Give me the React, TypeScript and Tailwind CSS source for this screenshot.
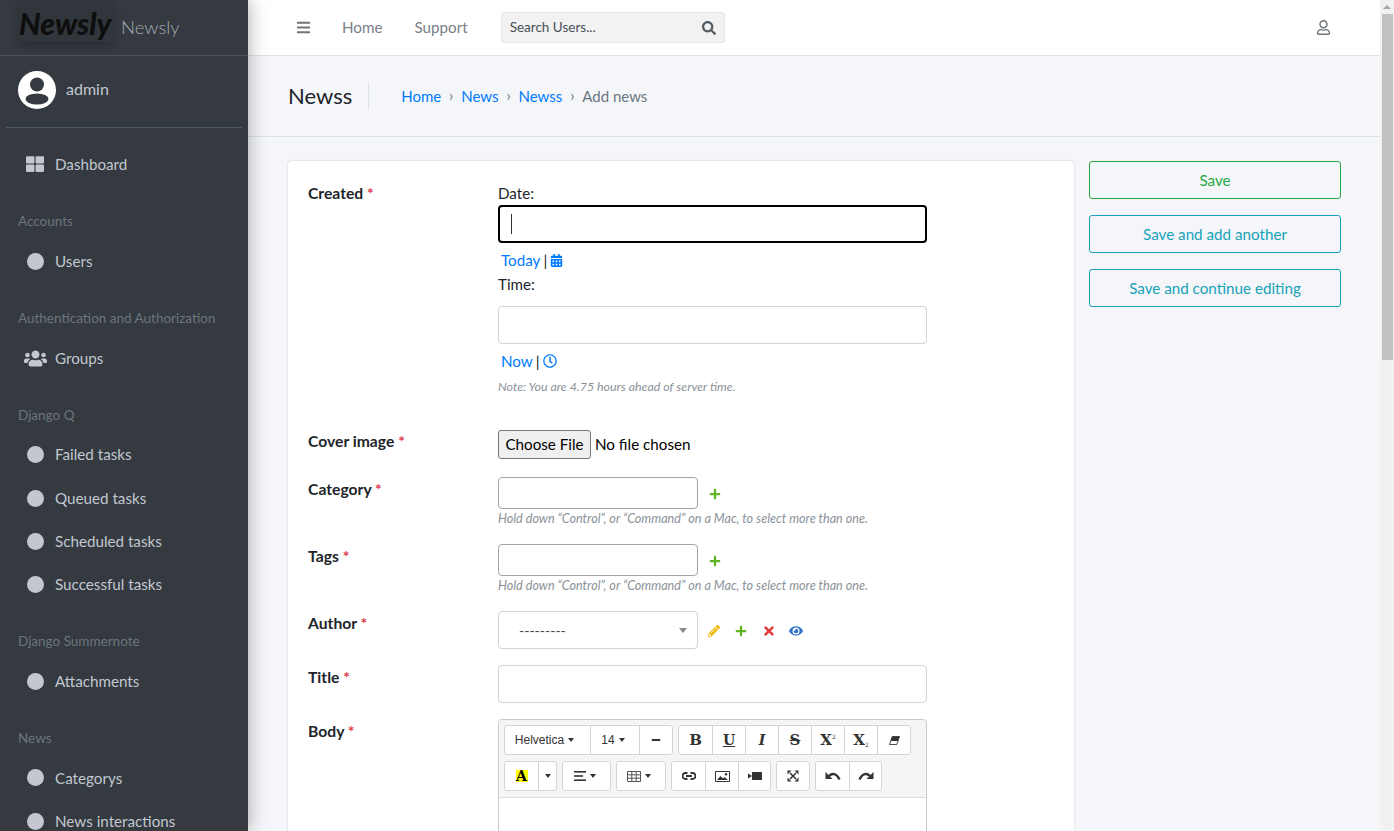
import type { ReactNode } from 'react';
import {
  FaBars,
  FaCalendarAlt,
  FaEye,
  FaMinus,
  FaPencilAlt,
  FaPlus,
  FaRegClock,
  FaRegUser,
  FaSearch,
  FaThLarge,
  FaTimes,
  FaUsers,
} from 'react-icons/fa';

const Dot = () => <div className="w-[17px] h-[17px] ml-[1px] rounded-full bg-[#c2c7d0]" />;

const NavItem = ({ label, icon }: { label: string; icon?: ReactNode }) => (
  <div className="flex items-center h-[43.2px] pl-[17px] shrink-0 text-[#c2c7d0]">
    <div className="w-[38px] pr-[2px] flex justify-center">{icon ?? <Dot />}</div>
    <span>{label}</span>
  </div>
);

const NavHeader = ({ label }: { label: string }) => (
  <div className="h-[53.6px] pt-[23px] pl-[18px] shrink-0 text-[13.5px] leading-[24px] text-[#6c757d]">{label}</div>
);

const Sidebar = () => (
  <aside className="w-[248px] shrink-0 bg-[#343a40] h-full overflow-hidden flex flex-col shadow-[0_0_18px_rgba(0,0,0,0.35)] z-10">
    <div className="h-[56px] shrink-0 border-b border-[#4b545c] flex items-start pl-[19px]">
      <div className="w-[94px] h-[42px] bg-[#31363c] shadow-[0_4px_8px_rgba(0,0,0,0.22)] text-[#0e0e0e] italic font-black text-[30px] leading-[46px] overflow-hidden">
        Newsly
      </div>
      <span className="ml-[8px] mt-[14px] text-[18.5px] leading-[26px] font-light text-[#a4abb3]">Newsly</span>
    </div>
    <div className="mx-[6px] h-[72px] shrink-0 border-b border-[#4f5962] flex items-center pl-[12px] pb-[4px]">
      <div className="w-[38px] h-[38px] rounded-full bg-white overflow-hidden">
        <svg viewBox="0 0 38 38" className="w-full h-full">
          <circle cx="19" cy="13.5" r="7" fill="#343a40" />
          <ellipse cx="19" cy="28" rx="11.5" ry="5.5" fill="#343a40" />
        </svg>
      </div>
      <span className="ml-[10px] pb-[2px] text-[16px] text-[#c2c7d0]">admin</span>
    </div>
    <nav className="flex flex-col pt-[14.9px]">
      <NavItem label="Dashboard" icon={<FaThLarge className="text-[18px]" />} />
      <NavHeader label="Accounts" />
      <NavItem label="Users" />
      <NavHeader label="Authentication and Authorization" />
      <NavItem label="Groups" icon={<FaUsers className="text-[23px]" />} />
      <NavHeader label="Django Q" />
      <NavItem label="Failed tasks" />
      <NavItem label="Queued tasks" />
      <NavItem label="Scheduled tasks" />
      <NavItem label="Successful tasks" />
      <NavHeader label="Django Summernote" />
      <NavItem label="Attachments" />
      <NavHeader label="News" />
      <NavItem label="Categorys" />
      <NavItem label="News interactions" />
    </nav>
  </aside>
);

const Topbar = () => (
  <header className="h-[56px] shrink-0 bg-white border-b border-[#dee2e6] flex items-center pl-[48px] pr-[49px] text-[#7a8087]">
    <FaBars className="text-[15px] text-[#6f7479]" />
    <span className="ml-[31px]">Home</span>
    <span className="ml-[32px]">Support</span>
    <div className="ml-[33px] w-[224px] h-[31px] bg-[#f2f2f2] border border-[#e3e5e8] rounded-[3px] flex items-center justify-between px-[8px] text-[13.5px] text-[#495057]">
      <span>Search Users...</span>
      <FaSearch className="text-[14px] text-[#555c63]" />
    </div>
    <FaRegUser className="ml-auto text-[15px] text-[#6f7479]" />
  </header>
);

const Sep = () => <span className="w-[20px] text-center text-[#6c757d] text-[15px] -mt-[2px]">›</span>;

const ContentHeader = () => (
  <div className="h-[81px] shrink-0 border-b border-[#dee2e6] flex items-center pl-[40px]">
    <div className="h-[28px] pr-[16px] border-r border-[#dee2e6] text-[22px] leading-[28px] text-[#212529]">Newss</div>
    <div className="ml-[32px] flex items-center text-[15px] text-[#007bff]">
      <span>Home</span>
      <Sep />
      <span>News</span>
      <Sep />
      <span>Newss</span>
      <Sep />
      <span className="text-[#6c757d]">Add news</span>
    </div>
  </div>
);

const Label = ({ text }: { text: string }) => (
  <div className="w-[190px] shrink-0 font-bold text-[15.7px] text-[#212529] leading-[24px]">
    {text} <span className="text-[#dc3545]">*</span>
  </div>
);

const Help = ({ text }: { text: string }) => (
  <div className="mt-[1px] text-[12.6px] italic text-[#8b9299] leading-[18px]">{text}</div>
);

const ToolBtn = ({ children, w = 33 }: { children: ReactNode; w?: number }) => (
  <div
    className="h-[28px] flex items-center justify-center border-l border-[#d4d4d4] first:border-l-0 text-[#333] shrink-0"
    style={{ width: w }}
  >
    {children}
  </div>
);

const ToolGroup = ({ children }: { children: ReactNode }) => (
  <div className="flex bg-white border border-[#d4d4d4] rounded-[3px] overflow-hidden">{children}</div>
);

const Caret = () => (
  <span className="ml-[4px] w-0 h-0 border-x-[3px] border-x-transparent border-t-[4px] border-t-[#333]" />
);

const UndoIcon = ({ flip }: { flip?: boolean }) => (
  <svg viewBox="0 0 16 10" className={flip ? 'w-[16px] h-[10px] -scale-x-100' : 'w-[16px] h-[10px]'}>
    <path d="M4 5C7 1.8 11.5 2 14.5 8.5" fill="none" stroke="#333" strokeWidth="2.4" />
    <path d="M0.5 1v7H7.5z" fill="#333" />
  </svg>
);

const Toolbar = () => (
  <div className="bg-[#f5f5f5] border-b border-[#dddddd] px-[5px] pt-[5px] h-[78px] flex flex-col gap-[6px]">
    <div className="flex gap-[5px]">
      <ToolGroup>
        <ToolBtn w={85}>
          <span className="flex items-center pr-[6px]">
            <span className="font-['Liberation_Sans',sans-serif] text-[12px]">Helvetica</span>
            <Caret />
          </span>
        </ToolBtn>
        <ToolBtn w={49}>
          <span className="flex items-center pr-[4px]">
            <span className="font-['Liberation_Sans',sans-serif] text-[12px]">14</span>
            <Caret />
          </span>
        </ToolBtn>
        <ToolBtn w={33}>
          <FaMinus className="text-[10px]" />
        </ToolBtn>
      </ToolGroup>
      <ToolGroup>
        <ToolBtn><span className="font-['DejaVu_Serif',serif] font-bold text-[15px]">B</span></ToolBtn>
        <ToolBtn><span className="font-['DejaVu_Serif',serif] font-bold text-[14px] underline">U</span></ToolBtn>
        <ToolBtn><span className="font-['DejaVu_Serif',serif] font-bold italic text-[14px]">I</span></ToolBtn>
        <ToolBtn><span className="font-['DejaVu_Serif',serif] font-bold text-[15px] line-through">S</span></ToolBtn>
        <ToolBtn>
          <span className="font-['DejaVu_Serif',serif] font-bold text-[15px]">X</span>
          <span className="font-['DejaVu_Serif',serif] text-[6px] mb-[7px]">2</span>
        </ToolBtn>
        <ToolBtn>
          <span className="font-['DejaVu_Serif',serif] font-bold text-[15px]">X</span>
          <span className="font-['DejaVu_Serif',serif] text-[6px] mt-[8px]">2</span>
        </ToolBtn>
        <ToolBtn>
          <svg viewBox="0 0 12 10" className="w-[11px] h-[9px]">
            <path d="M3.5 0.5H11.5L8.5 9.5H0.5z" fill="#fff" stroke="#333" strokeWidth="1" />
            <path d="M3.5 0.5H11.5L9.8 5.5H1.9z" fill="#333" />
          </svg>
        </ToolBtn>
      </ToolGroup>
    </div>
    <div className="flex gap-[5px]">
      <ToolGroup>
        <ToolBtn>
          <span className="w-[12px] h-[12px] bg-[#ffff00] flex items-center justify-center font-['DejaVu_Serif',serif] font-bold text-[14px] leading-[12px] text-black">A</span>
        </ToolBtn>
        <ToolBtn w={18}><span className="-ml-[4px] flex"><Caret /></span></ToolBtn>
      </ToolGroup>
      <ToolGroup>
        <ToolBtn w={47}>
          <span className="flex items-center pr-[4px]">
            <svg viewBox="0 0 12 10" className="w-[12px] h-[10px]" fill="#333">
              <rect x="0" y="0" width="12" height="1.6" />
              <rect x="0" y="4.2" width="9" height="1.6" />
              <rect x="0" y="8.4" width="12" height="1.6" />
            </svg>
            <Caret />
          </span>
        </ToolBtn>
      </ToolGroup>
      <ToolGroup>
        <ToolBtn w={48}>
          <span className="flex items-center pr-[5px]">
            <svg viewBox="0 0 14 11" className="w-[14px] h-[11px]" fill="none" stroke="#555" strokeWidth="1">
              <path d="M0.5 0.5h13v10h-13zM0.5 3.8h13M0.5 7.2h13M4.8 0.5v10M9.2 0.5v10" />
            </svg>
            <Caret />
          </span>
        </ToolBtn>
      </ToolGroup>
      <ToolGroup>
        <ToolBtn>
          <svg viewBox="0 0 14 8" className="w-[14px] h-[8px]" fill="none" stroke="#333" strokeWidth="1.8">
            <path d="M5.5 1H3.5a3 3 0 0 0 0 6h2M8.5 1h2a3 3 0 0 1 0 6h-2M4 4h6" />
          </svg>
        </ToolBtn>
        <ToolBtn>
          <svg viewBox="0 0 15 11" className="w-[15px] h-[11px]" fill="#333">
            <path d="M0.5 0.5h14v10h-14z" fill="none" stroke="#333" strokeWidth="1" />
            <path d="M2 9l3.5-4 2.5 2.5 1.5-1.5L13 9z" />
            <circle cx="11" cy="3.2" r="1.2" />
          </svg>
        </ToolBtn>
        <ToolBtn w={32}>
          <svg viewBox="0 0 14 8" className="w-[14px] h-[8px]" fill="#333">
            <rect x="4" y="0" width="10" height="8" rx="0.5" />
            <path d="M0 1.5v5l4-2.5z" />
          </svg>
        </ToolBtn>
      </ToolGroup>
      <ToolGroup>
        <ToolBtn w={32}>
          <svg viewBox="0 0 12 12" className="w-[12px] h-[12px]" stroke="#333" strokeWidth="1.5" fill="#333">
            <path d="M3 3l6 6M9 3l-6 6" fill="none" />
            <path d="M0.5 0.5h4l-4 4zM11.5 0.5h-4l4 4zM0.5 11.5h4l-4-4zM11.5 11.5h-4l4-4z" stroke="none" />
          </svg>
        </ToolBtn>
      </ToolGroup>
      <ToolGroup>
        <ToolBtn><UndoIcon /></ToolBtn>
        <ToolBtn w={32}><UndoIcon flip /></ToolBtn>
      </ToolGroup>
    </div>
  </div>
);

const NewsForm = () => (
  <div className="w-[786px] shrink-0 bg-white rounded-[4px] shadow-[0_0_2px_rgba(0,0,0,0.2)] pt-[20px] pl-[20px] pb-[40px] text-[#212529]">
    <div className="flex">
      <Label text="Created" />
      <div className="w-[429px]">
        <div className="leading-[24px]">Date:</div>
        <div className="h-[38px] border-2 border-black rounded-[4px] flex items-center pl-[11px]">
          <div className="w-px h-[20px] bg-[#333]" />
        </div>
        <div className="flex items-center h-[24px] mt-[5px] pl-[3px]">
          <span className="text-[#007bff]">Today</span>
          <span className="ml-[3px]">|</span>
          <FaCalendarAlt className="ml-[3px] text-[13px] text-[#007bff]" />
        </div>
        <div className="leading-[24px]">Time:</div>
        <div className="h-[38px] mt-[10px] border border-[#ced4da] rounded-[4px]" />
        <div className="flex items-center h-[24px] mt-[5px] pl-[3px]">
          <span className="text-[#007bff]">Now</span>
          <span className="ml-[3px]">|</span>
          <FaRegClock className="ml-[3px] text-[14px] text-[#007bff]" />
        </div>
        <div className="mt-[5px] text-[12.4px] italic text-[#8b9299] leading-[18px]">
          Note: You are 4.75 hours ahead of server time.
        </div>
      </div>
    </div>

    <div className="flex mt-[33px]">
      <Label text="Cover image" />
      <div className="flex items-center mt-[1px]">
        <div className="w-[93px] h-[29px] bg-[#efefef] border border-[#767676] rounded-[3px] flex items-center justify-center text-black">
          Choose File
        </div>
        <span className="ml-[4px] text-black">No file chosen</span>
      </div>
    </div>

    <div className="flex mt-[18px]">
      <Label text="Category" />
      <div>
        <div className="flex items-center">
          <div className="w-[200px] h-[32px] border border-[#a5a5a5] rounded-[4px]" />
          <FaPlus className="ml-[11px] mt-[1px] text-[12px] text-[#5fb51f]" />
        </div>
        <Help text="Hold down “Control”, or “Command” on a Mac, to select more than one." />
      </div>
    </div>

    <div className="flex mt-[16px]">
      <Label text="Tags" />
      <div>
        <div className="flex items-center">
          <div className="w-[200px] h-[32px] border border-[#a5a5a5] rounded-[4px]" />
          <FaPlus className="ml-[11px] mt-[1px] text-[12px] text-[#5fb51f]" />
        </div>
        <Help text="Hold down “Control”, or “Command” on a Mac, to select more than one." />
      </div>
    </div>

    <div className="flex mt-[16px]">
      <Label text="Author" />
      <div className="flex items-center">
        <div className="w-[200px] h-[38px] border border-[#ced4da] rounded-[4px] flex items-center justify-between pl-[20px] pr-[10px] text-[#444]">
          <span className="text-[14px]">---------</span>
          <span className="w-0 h-0 border-x-[4px] border-x-transparent border-t-[5px] border-t-[#888]" />
        </div>
        <FaPencilAlt className="ml-[10px] mt-[1px] text-[12px] text-[#efb80b]" />
        <FaPlus className="ml-[15px] mt-[1px] text-[12px] text-[#5fb51f]" />
        <FaTimes className="ml-[15px] mt-[1px] text-[14px] text-[#e03c3c]" />
        <FaEye className="ml-[13px] mt-[1px] text-[14px] text-[#2e70c9]" />
      </div>
    </div>

    <div className="flex mt-[16px]">
      <Label text="Title" />
      <div className="w-[429px] h-[38px] border border-[#ced4da] rounded-[4px]" />
    </div>

    <div className="flex mt-[16px]">
      <Label text="Body" />
      <div className="w-[429px] border border-[#c9c9c9] rounded-t-[4px] overflow-hidden">
        <Toolbar />
        <div className="h-[200px] bg-white" />
      </div>
    </div>
  </div>
);

const SaveButton = ({ label, green }: { label: string; green?: boolean }) => (
  <div
    className={
      green
        ? 'h-[38px] pt-[1px] border border-[#28a745] text-[#28a745] rounded-[3px] flex items-center justify-center'
        : 'h-[38px] pt-[1px] border border-[#17a2b8] text-[#17a2b8] rounded-[3px] flex items-center justify-center'
    }
  >
    {label}
  </div>
);

const Scrollbar = () => (
  <div className="w-[14px] shrink-0 h-full bg-[#f1f1f1] flex flex-col items-center">
    <div className="h-[14px] flex items-center justify-center">
      <div className="w-0 h-0 border-x-[4px] border-x-transparent border-b-[4px] border-b-[#a3a3a3]" />
    </div>
    <div className="w-[11px] ml-[1px] h-[346px] bg-[#c1c1c1]" />
  </div>
);

export default function App() {
  return (
    <div className="flex h-screen overflow-hidden bg-[#f4f6f9] font-['Lato',sans-serif] text-[15.2px]">
      <Sidebar />
      <main className="flex-1 min-w-0 flex flex-col h-full overflow-hidden">
        <Topbar />
        <ContentHeader />
        <div className="flex gap-[15px] pl-[40px] pt-[24px]">
          <NewsForm />
          <div className="w-[252px] flex flex-col gap-[16px]">
            <SaveButton label="Save" green />
            <SaveButton label="Save and add another" />
            <SaveButton label="Save and continue editing" />
          </div>
        </div>
      </main>
      <Scrollbar />
    </div>
  );
}
